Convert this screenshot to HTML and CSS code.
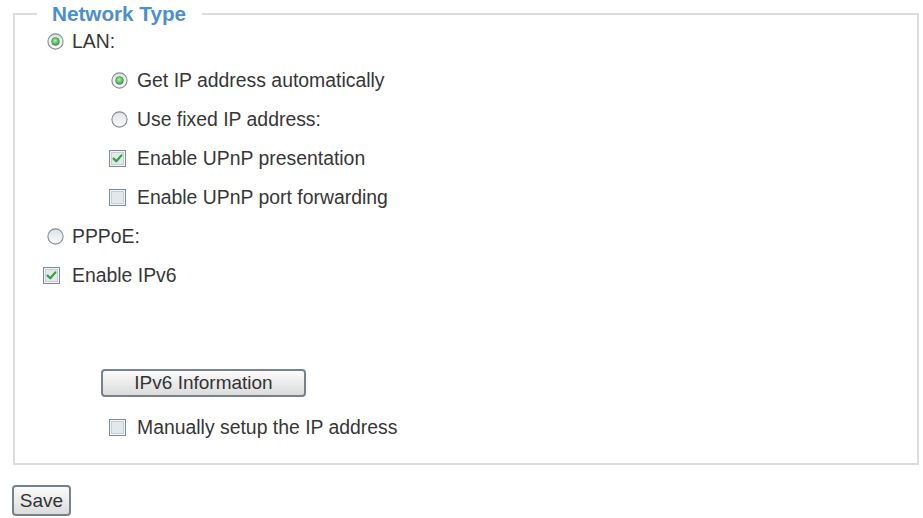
FILE: index.html
```html
<!DOCTYPE html>
<html>
<head>
<meta charset="utf-8">
<link rel="stylesheet" href="styles.css">
</head>
<body>
<fieldset class="group">
  <legend class="group-title">Network Type</legend>
  <div class="rows">
    <div class="row lvl1">
      <svg class="radio" viewBox="0 0 17 17"><defs><radialGradient id="g1" cx="45%" cy="40%" r="60%"><stop offset="0" stop-color="#b6f0ae"/><stop offset="1" stop-color="#2f9e3b"/></radialGradient><linearGradient id="rb" x1="0" y1="0" x2="0" y2="1"><stop offset="0" stop-color="#dfe3e7"/><stop offset="1" stop-color="#fafafa"/></linearGradient></defs><circle cx="8.5" cy="8.5" r="7.6" fill="url(#rb)" stroke="#838d96" stroke-width="1.1"/><circle cx="8.5" cy="8.5" r="3.9" fill="url(#g1)" stroke="#4b8f4a" stroke-width=".6"/></svg>
      <span>LAN:</span>
    </div>
    <div class="row lvl2">
      <svg class="radio" viewBox="0 0 17 17"><circle cx="8.5" cy="8.5" r="7.6" fill="url(#rb)" stroke="#838d96" stroke-width="1.1"/><circle cx="8.5" cy="8.5" r="3.9" fill="url(#g1)" stroke="#4b8f4a" stroke-width=".6"/></svg>
      <span>Get IP address automatically</span>
    </div>
    <div class="row lvl2">
      <svg class="radio" viewBox="0 0 17 17"><circle cx="8.5" cy="8.5" r="7.6" fill="url(#rb)" stroke="#838d96" stroke-width="1.1"/></svg>
      <span>Use fixed IP address:</span>
    </div>
    <div class="row lvl2">
      <svg class="check" viewBox="0 0 17 17"><rect x=".5" y=".5" width="16" height="16" fill="#f4f6f8" stroke="#7d8a96"/><rect x="2.5" y="2.5" width="12" height="12" fill="#e3e8ed" stroke="#c5cdd5"/><path d="M4.6 8.6 L7.3 11.3 L12.4 5.4" fill="none" stroke="#34a03c" stroke-width="2.2" stroke-linecap="round" stroke-linejoin="round"/></svg>
      <span>Enable UPnP presentation</span>
    </div>
    <div class="row lvl2">
      <svg class="check" viewBox="0 0 17 17"><rect x=".5" y=".5" width="16" height="16" fill="#f4f6f8" stroke="#7d8a96"/><rect x="2.5" y="2.5" width="12" height="12" fill="#e3e8ed" stroke="#c5cdd5"/></svg>
      <span>Enable UPnP port forwarding</span>
    </div>
    <div class="row lvl1">
      <svg class="radio" viewBox="0 0 17 17"><circle cx="8.5" cy="8.5" r="7.6" fill="url(#rb)" stroke="#838d96" stroke-width="1.1"/></svg>
      <span>PPPoE:</span>
    </div>
    <div class="row lvl1">
      <svg class="check" viewBox="0 0 17 17"><rect x=".5" y=".5" width="16" height="16" fill="#f4f6f8" stroke="#7d8a96"/><rect x="2.5" y="2.5" width="12" height="12" fill="#e3e8ed" stroke="#c5cdd5"/><path d="M4.6 8.6 L7.3 11.3 L12.4 5.4" fill="none" stroke="#34a03c" stroke-width="2.2" stroke-linecap="round" stroke-linejoin="round"/></svg>
      <span>Enable IPv6</span>
    </div>
    <div class="btn-row">
      <button class="btn btn-wide">IPv6 Information</button>
    </div>
    <div class="row lvl2 last">
      <svg class="check" viewBox="0 0 17 17"><rect x=".5" y=".5" width="16" height="16" fill="#f4f6f8" stroke="#7d8a96"/><rect x="2.5" y="2.5" width="12" height="12" fill="#e3e8ed" stroke="#c5cdd5"/></svg>
      <span>Manually setup the IP address</span>
    </div>
  </div>
</fieldset>
<div class="actions">
  <button class="btn btn-save">Save</button>
</div>
</body>
</html>
```
FILE: styles.css
```css
html, body {
  margin: 0;
  padding: 0;
  background: #ffffff;
}
body {
  font-family: "Liberation Sans", Arial, sans-serif;
  font-size: 19.4px;
  color: #363636;
}
.group {
  margin: 2px 4px 0 13px;
  padding: 0 0 21px 0;
  border: 2px solid #dcdcdc;
  min-width: 0;
}
.group-title {
  margin-left: 22px;
  padding: 0 16px 0 15px;
  font-weight: bold;
  font-size: 20.7px;
  line-height: 24px;
  color: #4a8fd0;
}
.rows {
  display: flex;
  flex-direction: column;
  gap: 9px;
}
.row {
  display: flex;
  align-items: center;
  height: 30px;
}
.row span {
  white-space: nowrap;
}
.lvl1 {
  padding-left: 32px;
}
.lvl2 {
  padding-left: 96px;
}
.radio {
  width: 17px;
  height: 17px;
  margin-right: 8px;
  flex: none;
}
.lvl2 .radio {
  margin-right: 9px;
}
.check {
  width: 17px;
  height: 17px;
  flex: none;
}
.lvl1 .check {
  margin-left: -4px;
  margin-right: 12px;
}
.lvl2 .check {
  margin-left: -2px;
  margin-right: 11px;
}
.btn-row {
  margin-top: 70px;
  padding-left: 86px;
  display: flex;
}
.btn {
  font-family: "Liberation Sans", Arial, sans-serif;
  font-size: 19px;
  color: #333;
  border: 2px solid #76818c;
  border-radius: 4px;
  background: linear-gradient(#fbfbfb, #ebebeb 50%, #dcdcdc);
  padding: 0;
  margin: 0;
}
.btn-wide {
  width: 205px;
  height: 28px;
}
.btn-save {
  width: 59px;
  height: 31px;
}
.last {
  margin-top: 6px;
}
.actions {
  margin: 20px 0 0 12px;
}
```
